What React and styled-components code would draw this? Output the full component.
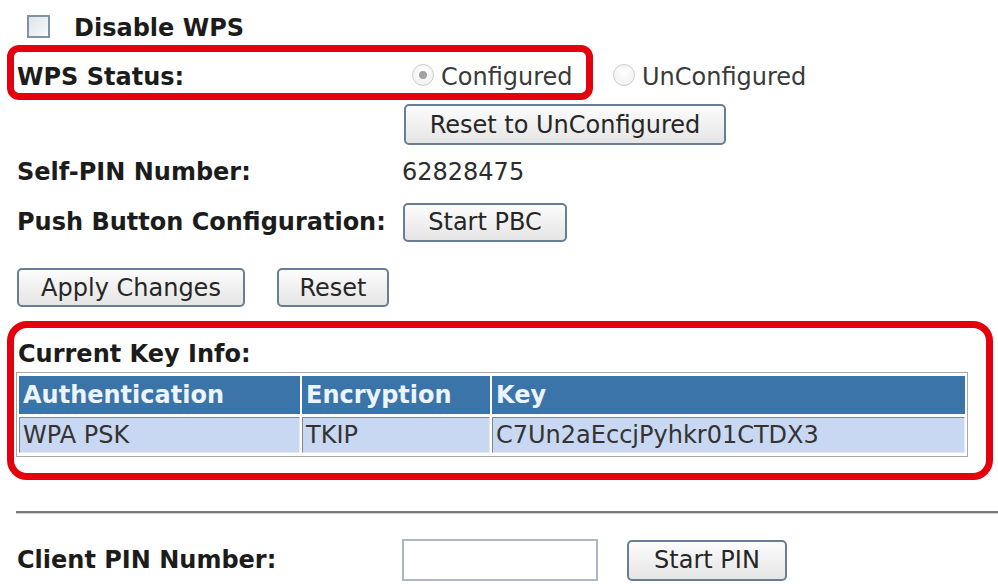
import styled, { createGlobalStyle } from "styled-components";

const GlobalStyle = createGlobalStyle`
  html, body {
    margin: 0;
    padding: 0;
    background: #fff;
  }
  body {
    font-family: "DejaVu Sans", Verdana, sans-serif;
    color: #1c1c1c;
  }
`;

const Page = styled.div`
  box-sizing: border-box;
  width: 998px;
  height: 584px;
  overflow: hidden;
  padding: 10px 0 0 17px;
  font-size: 24px;
  line-height: 28px;
`;

const CheckRow = styled.label`
  display: flex;
  align-items: center;
  height: 35px;
  padding-left: 10px;
  gap: 24px;
  font-weight: bold;
`;

const CheckBox = styled.span`
  box-sizing: border-box;
  width: 23px;
  height: 23px;
  margin-top: -2px;
  border: 2px solid #7f93a6;
  background: linear-gradient(135deg, #dfe5ea, #f7f9fb);
`;

const StatusRow = styled.div`
  display: flex;
  align-items: center;
  height: 55px;
  margin-left: -10px;
`;

const Highlight = styled.div`
  box-sizing: border-box;
  display: flex;
  align-items: center;
  width: 586px;
  height: 55px;
  padding: 9px 0 0 3px;
  border: 7px solid #e5000e;
  border-radius: 12px;
`;

const Label = styled.div`
  flex: none;
  width: 385px;
  font-weight: bold;
`;

const RadioOption = styled.label`
  display: flex;
  align-items: center;
  gap: 7px;
  margin-left: ${(p) => p.$offset}px;
  padding-top: ${(p) => p.$drop || 0}px;
  color: #3a3a3a;
`;

const RadioDot = styled.span`
  box-sizing: border-box;
  position: relative;
  width: 22px;
  height: 22px;
  margin-top: -4px;
  border-radius: 50%;
  border: 1.5px solid #cdcdcd;
  background: radial-gradient(circle at 50% 40%, #ffffff, #ededed);

  &::after {
    content: "";
    display: ${(p) => (p.$checked ? "block" : "none")};
    position: absolute;
    left: 50%;
    top: 50%;
    width: 8px;
    height: 8px;
    margin: -4px 0 0 -4px;
    border-radius: 50%;
    background: #a2a2a2;
  }
`;

const ValueRow = styled.div`
  display: flex;
  align-items: center;
  height: ${(p) => p.$h}px;
  margin-top: ${(p) => p.$mt || 0}px;
`;

const Indent = styled.div`
  padding-left: 387px;
  margin-top: 4px;
`;

const Value = styled.div`
  color: #2c2c2c;
`;

const Button = styled.button`
  box-sizing: border-box;
  width: ${(p) => p.$w}px;
  height: ${(p) => p.$h || 40}px;
  margin-left: ${(p) => p.$ml || 0}px;
  padding: 0;
  font: 24px "DejaVu Sans", Verdana, sans-serif;
  color: #262626;
  background: linear-gradient(#fcfcfc, #e5e5e5);
  border: 2px solid #6a7d92;
  border-radius: 5px;
`;

const KeyBox = styled.section`
  box-sizing: border-box;
  height: 159px;
  margin: 14px 0 0 -10px;
  width: 986px;
  padding: 12px 0 0 2px;
  border: 7px solid #e5000e;
  border-radius: 20px;
`;

const KeyTitle = styled.div`
  font-weight: bold;
  margin-left: 2px;
`;

const KeyTable = styled.table`
  width: 952px;
  margin-top: 4px;
  border: 1px solid #a9a9a9;
  border-spacing: 2px 3px;
  font-size: 24px;
`;

const HeadCell = styled.th`
  box-sizing: border-box;
  height: 38px;
  width: ${(p) => (p.$w ? `${p.$w}px` : "auto")};
  padding: 0 0 0 4px;
  text-align: left;
  background: #3b74a8;
  color: #ecf5ff;
  font-weight: bold;
`;

const DataCell = styled.td`
  box-sizing: border-box;
  height: 36px;
  padding: 0 0 0 3px;
  background: #c9d8f2;
  color: #333;
  border: 1px solid;
  border-color: #7b889b #e2e9f5 #e2e9f5 #7b889b;
`;

const Divider = styled.div`
  height: 2px;
  margin: 31px 0 0 -1px;
  background: #7a7a7a;
  box-shadow: 0 1px 0 #d0d0d0;
`;

const PinInput = styled.input`
  box-sizing: border-box;
  width: 196px;
  height: 42px;
  border: 2px solid #adb7c1;
  background: #fff;
`;

export default function App() {
  return (
    <>
      <GlobalStyle />
      <Page>
        <CheckRow>
          <CheckBox />
          Disable WPS
        </CheckRow>

        <StatusRow>
          <Highlight>
            <Label>WPS Status:</Label>
            <RadioOption $offset={10}>
              <RadioDot $checked />
              Configured
            </RadioOption>
          </Highlight>
          <RadioOption $offset={20} $drop={9}>
            <RadioDot />
            UnConfigured
          </RadioOption>
        </StatusRow>

        <Indent>
          <Button $w={322} $h={41}>Reset to UnConfigured</Button>
        </Indent>

        <ValueRow $h={50} $mt={2}>
          <Label>Self-PIN Number:</Label>
          <Value>62828475</Value>
        </ValueRow>

        <ValueRow $h={50}>
          <Label>Push Button Configuration:</Label>
          <Button $w={164} $h={39} $ml={1}>Start PBC</Button>
        </ValueRow>

        <ValueRow $h={39} $mt={21}>
          <Button $w={228} $h={39}>Apply Changes</Button>
          <Button $w={112} $h={39} $ml={32}>Reset</Button>
        </ValueRow>

        <KeyBox>
          <KeyTitle>Current Key Info:</KeyTitle>
          <KeyTable>
            <thead>
              <tr>
                <HeadCell $w={281}>Authentication</HeadCell>
                <HeadCell $w={188}>Encryption</HeadCell>
                <HeadCell>Key</HeadCell>
              </tr>
            </thead>
            <tbody>
              <tr>
                <DataCell>WPA PSK</DataCell>
                <DataCell>TKIP</DataCell>
                <DataCell>C7Un2aEccjPyhkr01CTDX3</DataCell>
              </tr>
            </tbody>
          </KeyTable>
        </KeyBox>

        <Divider />

        <ValueRow $h={42} $mt={26}>
          <Label>Client PIN Number:</Label>
          <PinInput />
          <Button $w={160} $h={41} $ml={29}>Start PIN</Button>
        </ValueRow>
      </Page>
    </>
  );
}
